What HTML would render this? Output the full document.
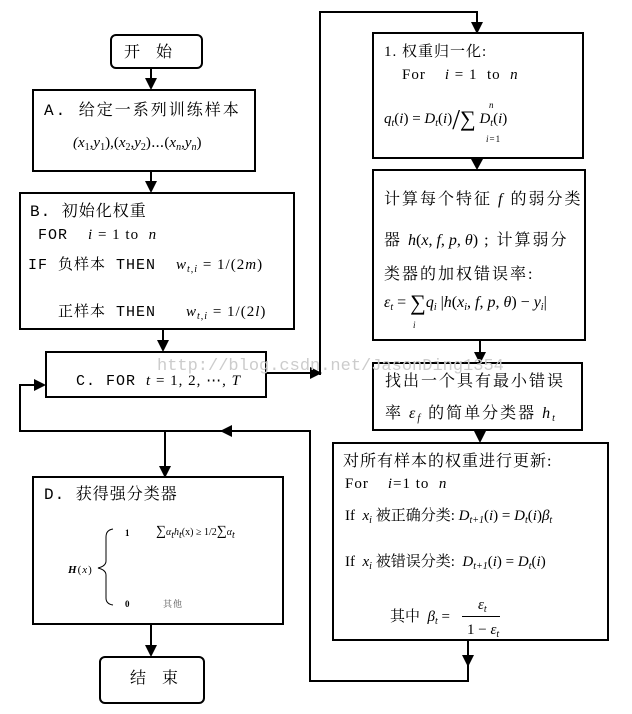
<!DOCTYPE html>
<html><head><meta charset="utf-8"><style>
body{margin:0;background:#fff;}
#c{position:relative;width:632px;height:714px;overflow:hidden;font-family:"Liberation Serif","Noto Serif CJK SC",serif;color:#000;}
.t{position:absolute;white-space:nowrap;font-size:15px;line-height:18px;letter-spacing:1px;}
.m{font-family:"Liberation Mono","Noto Serif CJK SC",monospace;}
i{font-style:italic;}
sub{font-size:10px;vertical-align:-3px;}
</style></head><body><div id="c">
<svg width="632" height="714" style="position:absolute;left:0;top:0" fill="none" stroke="#000" stroke-width="2">
<rect x="111" y="35" width="91" height="33" rx="5"/>
<rect x="33" y="90" width="222" height="81"/>
<rect x="20" y="193" width="274" height="136"/>
<rect x="46" y="352" width="220" height="45"/>
<rect x="373" y="33" width="210" height="125"/>
<rect x="373" y="170" width="212" height="170"/>
<rect x="373" y="363" width="209" height="67"/>
<rect x="333" y="443" width="275" height="197"/>
<rect x="33" y="477" width="250" height="147"/>
<rect x="100" y="657" width="104" height="46" rx="5"/>
<polyline points="151,68 151,84"/>
<polyline points="151,171 151,187"/>
<polyline points="163,329 163,346"/>
<polyline points="266,373 314,373"/>
<polyline points="320,375 320,12 477,12 477,27"/>
<polyline points="477,158 477,165"/>
<polyline points="480,340 480,357"/>
<polyline points="480,430 480,437"/>
<polyline points="468,640 468,681 310,681 310,431 20,431 20,385 40,385"/>
<polyline points="165,431 165,471"/>
<polyline points="151,624 151,651"/>
<g fill="#000" stroke="none">
<polygon points="145,78 157,78 151,90"/>
<polygon points="145,181 157,181 151,193"/>
<polygon points="157,340 169,340 163,352"/>
<polygon points="310,367 310,379 322,373"/>
<polygon points="471,22 483,22 477,34"/>
<polygon points="471,159 483,159 477,170"/>
<polygon points="474,352 486,352 480,364"/>
<polygon points="474,431 486,431 480,443"/>
<polygon points="34,379 34,391 46,385"/>
<polygon points="232,425 232,437 220,431"/>
<polygon points="159,466 171,466 165,478"/>
<polygon points="145,645 157,645 151,657"/>
<polygon points="462,655 474,655 468,667"/>
</g>
<path d="M113 529 Q106 530 106 537 L106 561 Q106 566 98 568 Q106 570 106 575 L106 598 Q106 604 113 605" stroke-width="1"/>
</svg>
<div class="t" style="left:124px;top:44px;font-size:16px">开&nbsp;&nbsp;&nbsp;始</div>
<div class="t m" style="left:44px;top:102px;font-size:16px;letter-spacing:2px">A. 给定一系列训练样本</div>
<div class="t" style="left:73px;top:134px;font-size:15px;letter-spacing:0"><i>(x</i><sub>1</sub>,<i>y</i><sub>1</sub>),(<i>x</i><sub>2</sub>,<i>y</i><sub>2</sub>)⋯(<i>x<sub>n</sub></i>,<i>y<sub>n</sub></i>)</div>
<div class="t m" style="left:30px;top:203px;font-size:16px">B. 初始化权重</div>
<div class="t m" style="left:38px;top:226px">FOR&nbsp; <i style="font-family:'Liberation Serif'">i</i><span style="font-family:'Liberation Serif'"> = 1 to&nbsp; <i>n</i></span></div>
<div class="t m" style="left:28px;top:256px">IF 负样本 THEN&nbsp; <span style="font-family:'Liberation Serif'"><i>w<sub>t,i</sub></i> = 1/(2<i>m</i>)</span></div>
<div class="t m" style="left:58px;top:303px">正样本 THEN&nbsp;&nbsp; <span style="font-family:'Liberation Serif'"><i>w<sub>t,i</sub></i> = 1/(2<i>l</i>)</span></div>
<div class="t m" style="left:76px;top:372px">C. FOR <span style="font-family:'Liberation Serif'"><i>t</i> = 1, 2, ⋯, <i>T</i></span></div>
<div class="t m" style="left:157px;top:358px;color:#ccc;font-size:17px;letter-spacing:0">http://blog.csdn.net/JasonDing1354</div>
<div class="t" style="left:384px;top:43px">1. 权重归一化:</div>
<div class="t" style="left:402px;top:66px">For&nbsp;&nbsp;&nbsp; <i>i</i> = 1&nbsp; to&nbsp; <i>n</i></div>
<div class="t" style="left:384px;top:110px;letter-spacing:0"><i>q<sub>t</sub></i>(<i>i</i>) = <i>D<sub>t</sub></i>(<i>i</i>)<span style="font-size:28px;vertical-align:-6px">/</span><span style="font-size:22px;vertical-align:-3px">∑</span> <i>D<sub>t</sub></i>(<i>i</i>)</div>
<div class="t" style="left:489px;top:96px;font-size:9px"><i>n</i></div>
<div class="t" style="left:486px;top:130px;font-size:9px"><i>i</i>=1</div>
<div class="t" style="left:384px;top:191px;font-size:16px;letter-spacing:2px">计算每个特征 <i>f</i> 的弱分类</div>
<div class="t" style="left:384px;top:232px;font-size:16px;letter-spacing:2px">器 <span style="letter-spacing:0"><i>h</i>(<i>x</i>, <i>f</i>, <i>p</i>, <i>θ</i>)</span> ; 计算弱分</div>
<div class="t" style="left:384px;top:266px;font-size:16px;letter-spacing:2px">类器的加权错误率:</div>
<div class="t" style="left:384px;top:294px;font-size:16px;letter-spacing:0"><i>ε<sub>t</sub></i> = <span style="font-size:22px;vertical-align:-3px">∑</span><i>q<sub>i</sub></i> |<i>h</i>(<i>x<sub>i</sub></i>, <i>f</i>, <i>p</i>, <i>θ</i>) − <i>y<sub>i</sub></i>|</div>
<div class="t" style="left:413px;top:316px;font-size:9px"><i>i</i></div>
<div class="t" style="left:385px;top:373px;font-size:16px;letter-spacing:2px">找出一个具有最小错误</div>
<div class="t" style="left:385px;top:405px;font-size:16px;letter-spacing:2px">率 <i>ε<sub>f</sub></i> 的简单分类器 <i>h<sub>t</sub></i></div>
<div class="t" style="left:343px;top:453px;font-size:16px">对所有样本的权重进行更新:</div>
<div class="t" style="left:345px;top:475px">For&nbsp;&nbsp;&nbsp; <i>i</i>=1 to&nbsp; <i>n</i></div>
<div class="t" style="left:345px;top:507px;letter-spacing:0">If&nbsp; <i>x<sub>i</sub></i> 被正确分类: <i>D<sub>t+1</sub></i>(<i>i</i>) = <i>D<sub>t</sub></i>(<i>i</i>)<i>β<sub>t</sub></i></div>
<div class="t" style="left:345px;top:553px;letter-spacing:0">If&nbsp; <i>x<sub>i</sub></i> 被错误分类:&nbsp; <i>D<sub>t+1</sub></i>(<i>i</i>) = <i>D<sub>t</sub></i>(<i>i</i>)</div>
<div class="t" style="left:390px;top:608px;letter-spacing:0">其中&nbsp; <i>β<sub>t</sub></i> =</div>
<div class="t" style="left:478px;top:596px;letter-spacing:0"><i>ε<sub>t</sub></i></div>
<div style="position:absolute;left:462px;top:616px;width:38px;height:1px;background:#000"></div>
<div class="t" style="left:467px;top:621px;letter-spacing:0">1 − <i>ε<sub>t</sub></i></div>
<div class="t m" style="left:44px;top:486px;font-size:16px">D. 获得强分类器</div>
<div class="t" style="left:68px;top:561px;font-size:11px"><i><b>H</b></i>(<i>x</i>)</div>
<div class="t" style="left:125px;top:524px;font-size:9px"><b>1</b></div>
<div class="t" style="left:125px;top:595px;font-size:9px"><b>0</b></div>
<div class="t" style="left:156px;top:523px;font-size:10px;letter-spacing:0"><span style="font-size:14px">∑</span><i>α<sub>t</sub>h<sub>t</sub></i>(x) ≥ 1/2<span style="font-size:14px">∑</span><i>α<sub>t</sub></i></div>
<div class="t" style="left:163px;top:595px;font-size:9px;color:#555">其他</div>
<div class="t" style="left:130px;top:670px;font-size:16px">结&nbsp;&nbsp;&nbsp;束</div>
</div></body></html>
